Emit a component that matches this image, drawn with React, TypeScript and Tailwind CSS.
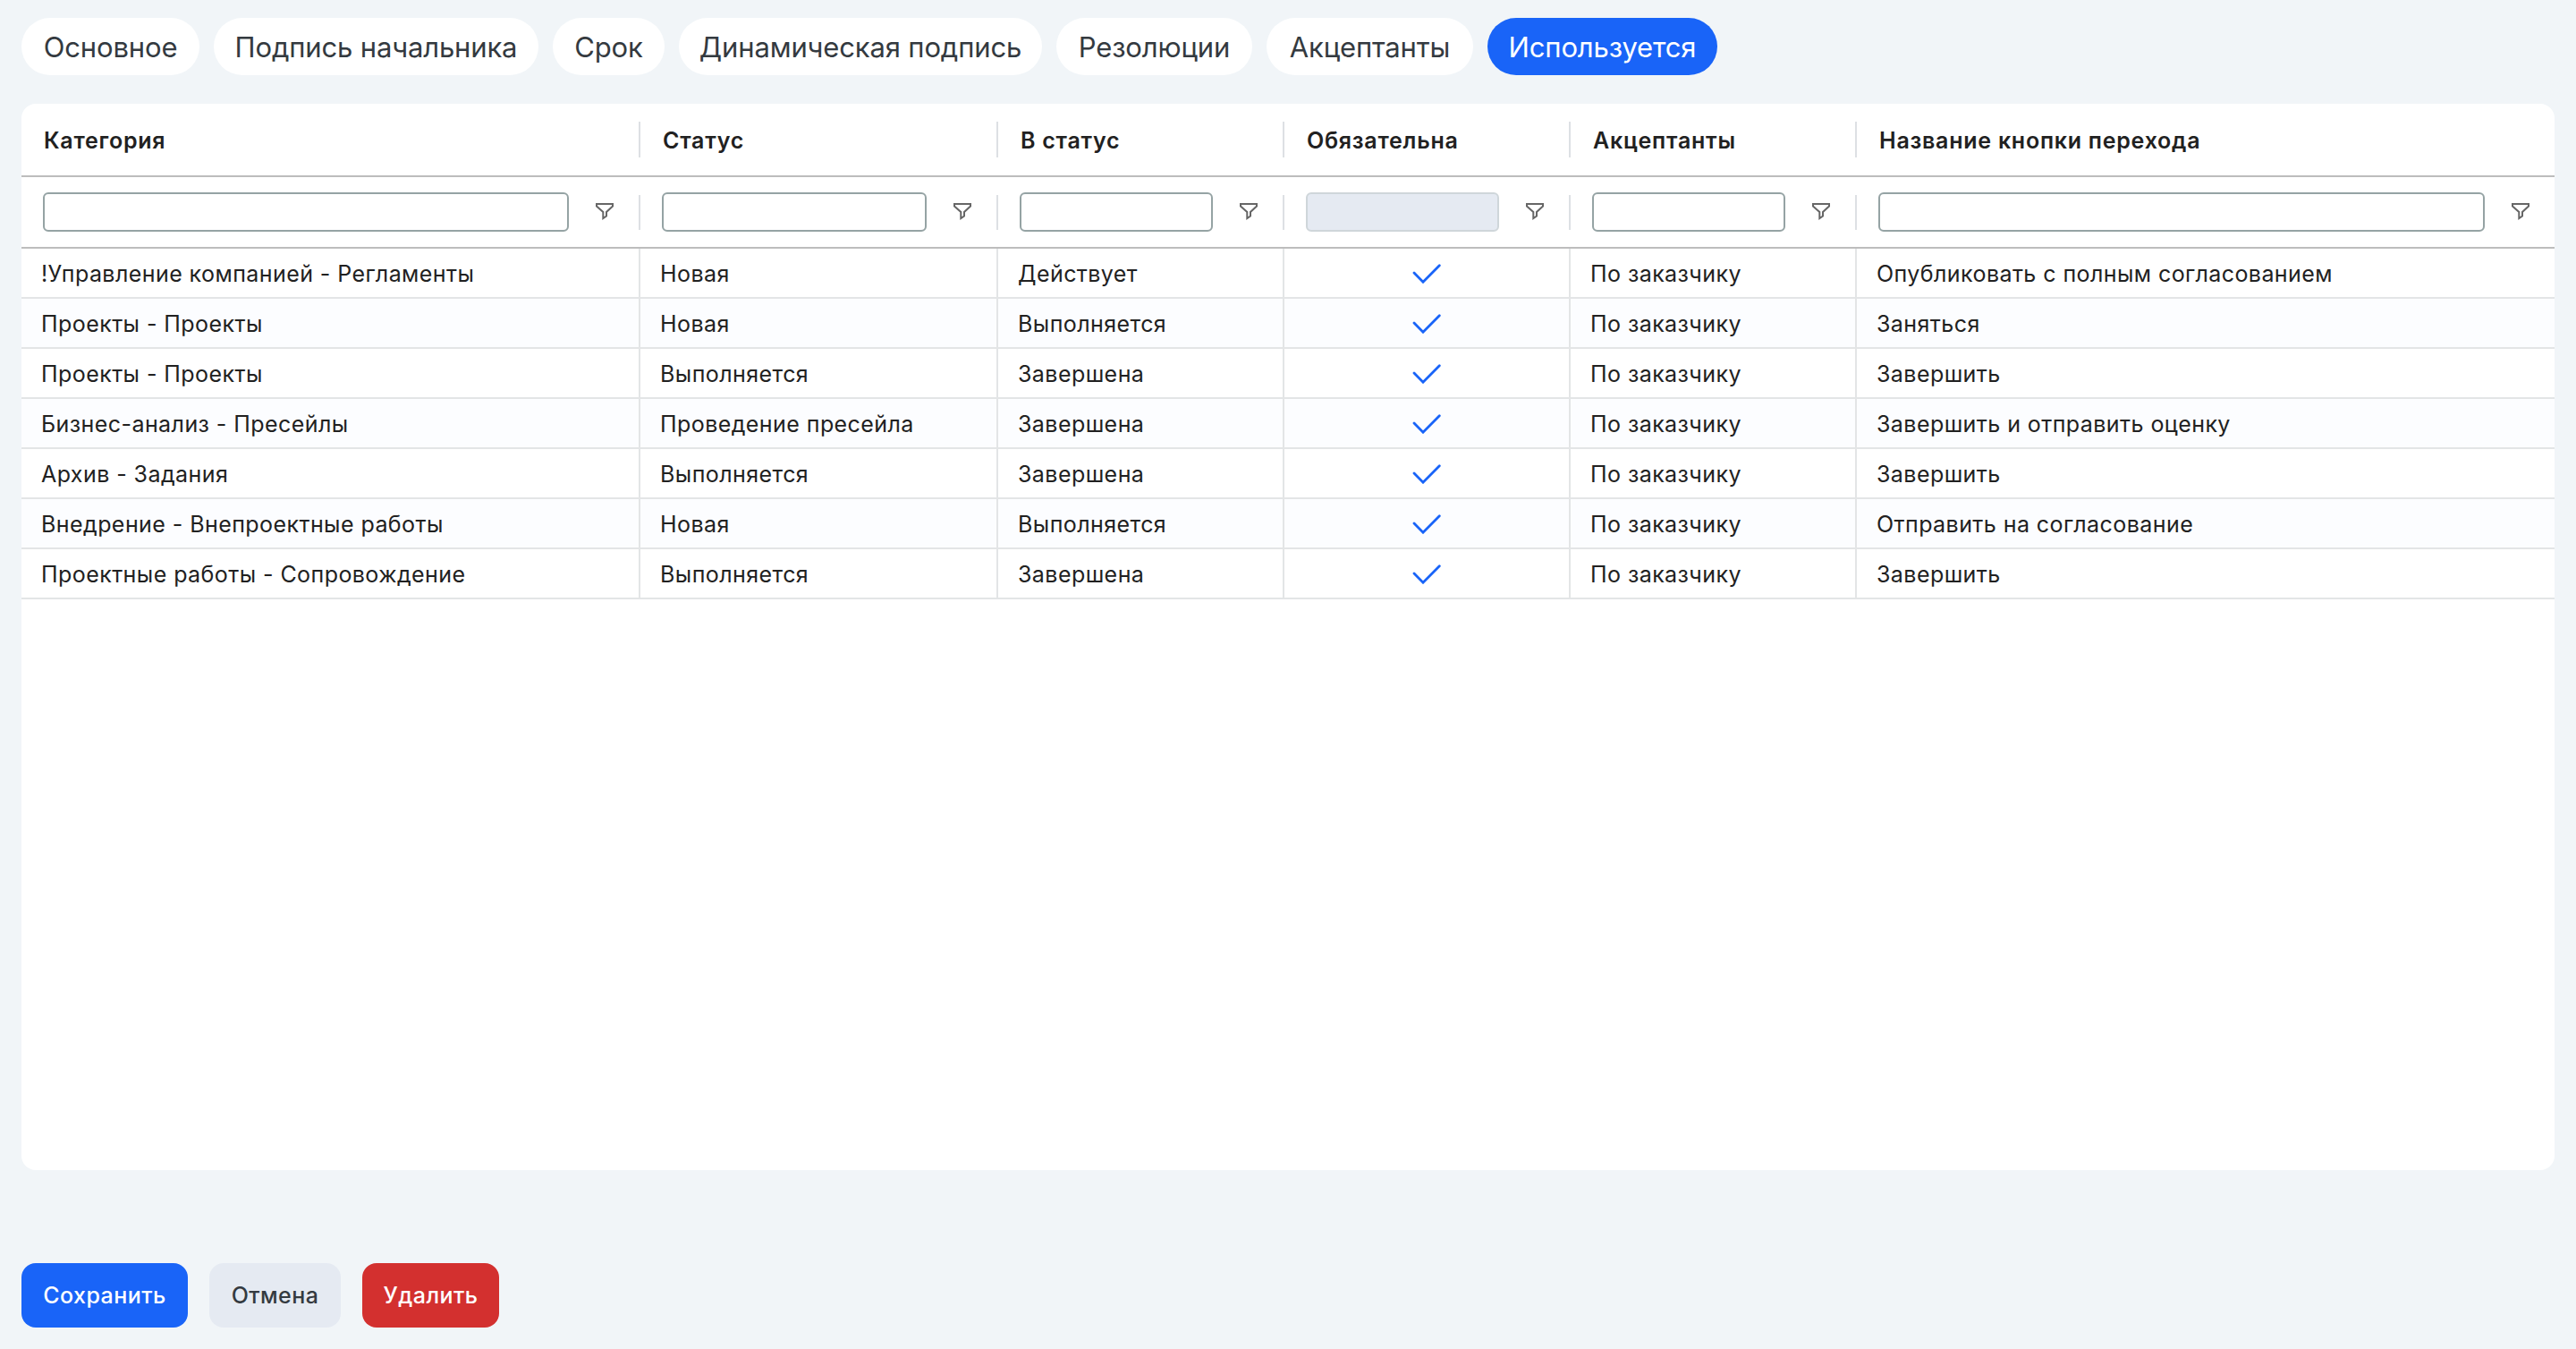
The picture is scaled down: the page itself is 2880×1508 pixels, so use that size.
import React, { useState } from 'react';

const tabs = [
  { title: 'Основное', width: 'w-[199px]' },
  { title: 'Подпись начальника', width: 'w-[363px]' },
  { title: 'Срок', width: 'w-[125px]' },
  { title: 'Динамическая подпись', width: 'w-[406px]' },
  { title: 'Резолюции', width: 'w-[219px]' },
  { title: 'Акцептанты', width: 'w-[231px]' },
  { title: 'Используется', width: 'w-[257px]' },
];

const columns = [
  { title: 'Категория' },
  { title: 'Статус' },
  { title: 'В статус' },
  { title: 'Обязательна', disabled: true },
  { title: 'Акцептанты' },
  { title: 'Название кнопки перехода' },
];

const rows = [
  ['!Управление компанией - Регламенты', 'Новая', 'Действует', true, 'По заказчику', 'Опубликовать с полным согласованием'],
  ['Проекты - Проекты', 'Новая', 'Выполняется', true, 'По заказчику', 'Заняться'],
  ['Проекты - Проекты', 'Выполняется', 'Завершена', true, 'По заказчику', 'Завершить'],
  ['Бизнес-анализ - Пресейлы', 'Проведение пресейла', 'Завершена', true, 'По заказчику', 'Завершить и отправить оценку'],
  ['Архив - Задания', 'Выполняется', 'Завершена', true, 'По заказчику', 'Завершить'],
  ['Внедрение - Внепроектные работы', 'Новая', 'Выполняется', true, 'По заказчику', 'Отправить на согласование'],
  ['Проектные работы - Сопровождение', 'Выполняется', 'Завершена', true, 'По заказчику', 'Завершить'],
];

const grid = 'grid grid-cols-[692px_400px_320px_320px_320px_1fr]';
const button = 'h-[72px] rounded-2xl text-[25px] leading-[38px] tracking-[0.45px] font-medium';

const FilterIcon = () => (
  <svg width="20" height="20" viewBox="0 0 20 20" fill="none" stroke="#666" strokeWidth="2" className="shrink-0">
    <path d="M1 1H19V3.5L12 10V14.5L8.3 17V10L1 3.5Z" />
  </svg>
);

const CheckIcon = () => (
  <svg width="32" height="24" viewBox="0 0 32 24" fill="none" stroke="#1964f8" strokeWidth="2.8" strokeLinecap="round">
    <path d="M2 12L12 22.2L30.3 3.7" />
  </svg>
);

export default function App() {
  const [active, setActive] = useState('Используется');

  return (
    <div className="flex flex-col w-[2880px] h-[1508px] bg-[#f1f5f8] px-6 pt-5 pb-6 font-['Inter','Liberation_Sans',sans-serif] text-[#212121]">
      <nav className="flex gap-4 mb-8">
        {tabs.map((tab) => (
          <button
            key={tab.title}
            onClick={() => setActive(tab.title)}
            className={`${tab.width} h-16 pt-0.5 rounded-full text-[31px] tracking-[-0.15px] whitespace-nowrap ${tab.title === active ? 'bg-[#1964f8] text-white' : 'bg-white text-[#343a40]'}`}
          >
            {tab.title}
          </button>
        ))}
      </nav>

      <div className="h-[1192px] bg-white rounded-2xl overflow-hidden">
        <div className={`${grid} h-[82px] border-b-2 border-[#bdbdbd]`}>
          {columns.map((col) => (
            <div key={col.title} className="group flex items-center justify-between pl-[25px] text-[25px] leading-[38px] tracking-[0.75px] font-semibold whitespace-nowrap">
              <span className="pt-0.5">{col.title}</span>
              <span className="w-0.5 h-10 bg-[#dde0e4] group-last:hidden" />
            </div>
          ))}
        </div>

        <div className={`${grid} h-20 border-b-2 border-[#bdbdbd]`}>
          {columns.map((col) => (
            <div key={col.title} className="group flex items-center pl-6">
              <input
                disabled={col.disabled}
                className="flex-1 min-w-0 h-11 px-2 rounded-md border-2 border-[#95a3a4] bg-white text-[25px] outline-none disabled:bg-[#e5eaf2] disabled:border-[#cfd6da]"
              />
              <span className="pl-[30px] pr-7"><FilterIcon /></span>
              <span className="w-0.5 h-[39px] bg-[#dde0e4] group-last:hidden" />
            </div>
          ))}
        </div>

        <div>
          {rows.map((row, i) => (
            <div key={i} className={`${grid} h-14 border-b-2 border-[#e3e5e6] even:bg-[#fcfdff]`}>
              {row.map((cell, j) => (
                <div key={j} className="flex items-center pl-[22px] border-r-2 border-[#e3e5e6] last:border-r-0 text-[25px] leading-[38px] tracking-[0.43px] whitespace-nowrap">
                  {cell === true ? <span className="mx-auto pr-[22px]"><CheckIcon /></span> : <span className="pt-0.5">{cell}</span>}
                </div>
              ))}
            </div>
          ))}
        </div>
      </div>

      <div className="flex gap-6 mt-auto">
        <button className={`${button} w-[186px] bg-[#1964f8] text-white`}>Сохранить</button>
        <button className={`${button} w-[147px] bg-[#e5eaf2] text-[#343a40]`}>Отмена</button>
        <button className={`${button} w-[153px] bg-[#d3302f] text-white`}>Удалить</button>
      </div>
    </div>
  );
}
